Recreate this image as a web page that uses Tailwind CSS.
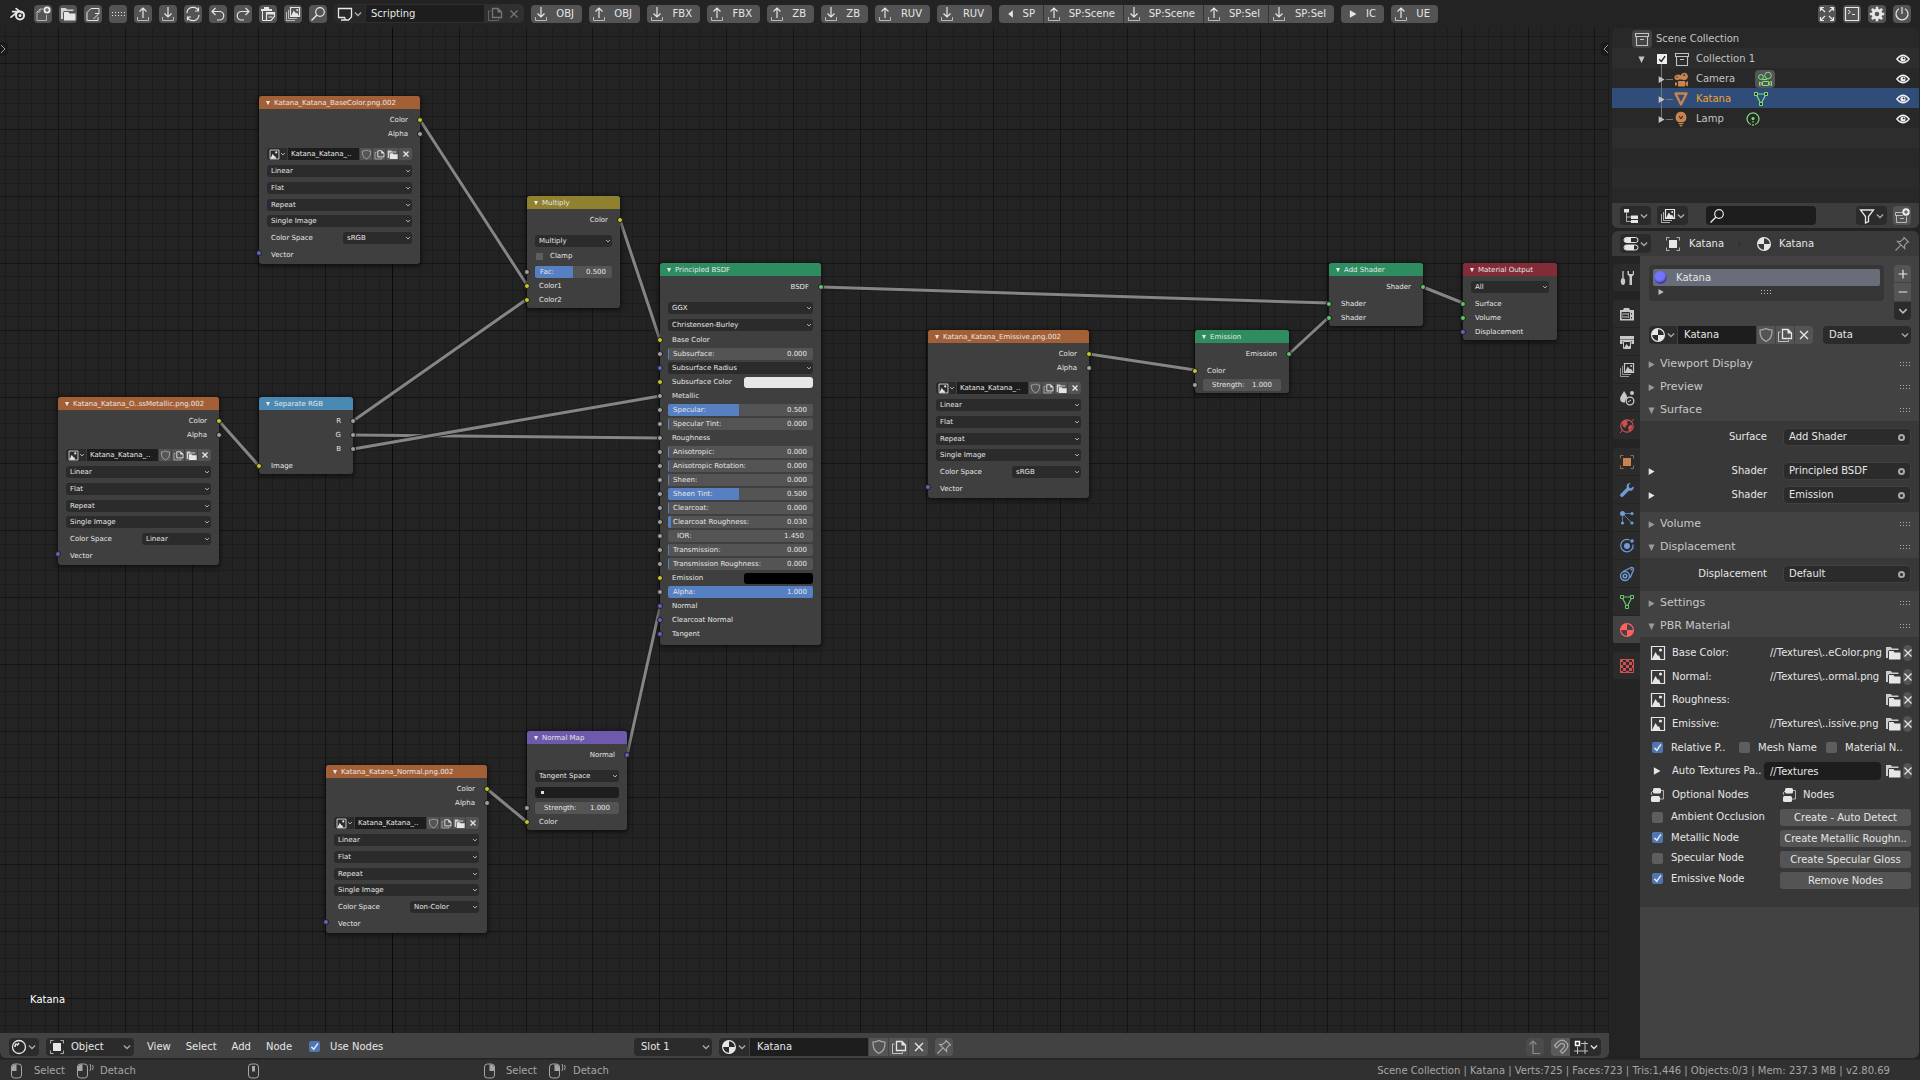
<!DOCTYPE html>
<html lang="en">
<head>
<meta charset="utf-8">
<title>Blender – Scripting</title>
<script src="https://cdn.jsdelivr.net/npm/@tailwindcss/browser@4"></script>
</head>
<body class="flex h-screen flex-col overflow-hidden bg-[#232323] font-['DejaVu_Sans',sans-serif] text-[10px] leading-[14px] text-[#e6e6e6]">

<!-- Icon set, drawn on a 16 px grid -->
<svg class="hidden" aria-hidden="true" fill="none">
  <defs>
  <symbol id="blender" viewBox="0 0 16 16"><path d="M1 11.2 8 5.6H2.6M6.2 2.6l5.4 4.2" fill="none" stroke="currentColor" stroke-width="1.7" stroke-linecap="round" stroke-linejoin="round"/><circle cx="10" cy="9.4" r="4" fill="none" stroke="currentColor" stroke-width="2"/><circle cx="10" cy="9.4" r="1.5" fill="currentColor"/></symbol>
  <symbol id="newfile" viewBox="0 0 16 16"><path d="M8 3H5L2 6v8.5h9.500V9M5 3v3H2" fill="none" stroke="currentColor" opacity=".65"/><circle cx="12" cy="4" r="3.500" fill="#eee"/><path d="M12 2v4M10 4h4" stroke="#444"/></symbol>
  <symbol id="folder" viewBox="0 0 16 16"><path d="M1 2h5l1 1.500h6.500V5H4L3 6.500V13H1z" fill="currentColor" opacity=".85"/><path d="M4 6h4.500l1 1.500h6v7H4z" fill="currentColor"/></symbol>
  <symbol id="save" viewBox="0 0 16 16"><path d="M14 2.500H6L2 6.500v8h11V11M14 2.500v5M10 7.500h4M14 7.500 8.500 13" fill="none" stroke="currentColor"/></symbol>
  <symbol id="dots" viewBox="0 0 16 16"><path d="M2 6.500h1m2 0h1m2 0h1m2 0h1m2 0h1M2 9.500h1m2 0h1m2 0h1m2 0h1m2 0h1" stroke="currentColor"/></symbol>
  <symbol id="up" viewBox="0 0 16 16"><path d="M2.500 11v3.500h11V11" fill="none" stroke="currentColor" opacity=".7"/><path d="M8 12V2M4.500 5.500 8 2l3.500 3.500" fill="none" stroke="currentColor" stroke-width="1.200"/></symbol>
  <symbol id="down" viewBox="0 0 16 16"><path d="M2.500 11v3.500h11V11" fill="none" stroke="currentColor" opacity=".7"/><path d="M8 1v10M4.500 7.500 8 11l3.500-3.500" fill="none" stroke="currentColor" stroke-width="1.200"/></symbol>
  <symbol id="refresh" viewBox="0 0 16 16"><path d="M2 7a6 6 0 0 1 11.500-2M14 9a6 6 0 0 1-11.500 2M13.500 1.500V5H10M2.500 14.500V11H6" fill="none" stroke="currentColor" stroke-width="1.200"/></symbol>
  <symbol id="undo" viewBox="0 0 16 16"><path d="M5.500 2 2 5.500 5.500 9M2 5.500h7.500a4 4 0 0 1 0 8.500H7" fill="none" stroke="currentColor" stroke-width="1.200"/></symbol>
  <symbol id="redo" viewBox="0 0 16 16"><path d="M10.500 2 14 5.500 10.500 9M14 5.500H6.500a4 4 0 0 0 0 8.500H9" fill="none" stroke="currentColor" stroke-width="1.200"/></symbol>
  <symbol id="paste" viewBox="0 0 16 16"><path d="M1 3h3V1h5v2h3v2H1z" fill="currentColor"/><path d="M2.500 5v9.500H6" fill="none" stroke="currentColor"/><path d="M6.500 6.500h8v4l-3.500 4H6.500z" fill="none" stroke="currentColor" stroke-width="1.200"/><path d="M6 6h9v2.500H6zM8.500 10.500h4v1h-4z" fill="currentColor"/></symbol>
  <symbol id="images" viewBox="0 0 16 16"><path d="M5.500 1.500h9v9h-9z" fill="none" stroke="currentColor" stroke-width="1.200"/><path d="M3.500 4v8.500H12M1.500 6v8.500H10" fill="none" stroke="currentColor" opacity=".7"/><path d="m6 10 2.800-5.500 2.200 3 1-1 2 3.500z" fill="currentColor"/><circle cx="12.200" cy="4" r="1" fill="currentColor"/></symbol>
  <symbol id="search" viewBox="0 0 16 16"><circle cx="10" cy="6" r="4.300" fill="none" stroke="currentColor" stroke-width="1.200"/><path d="m7 9-5.500 5.500" stroke="currentColor" stroke-width="1.400"/></symbol>
  <symbol id="screen" viewBox="0 0 16 16"><path d="M8 11.500H1.500v-9h13V9" fill="none" stroke="currentColor" stroke-width="1.300"/><path d="M8 11.500V14H4M8 14h3.500L14.500 11V8" fill="none" stroke="currentColor" stroke-width="1.300"/></symbol>
  <symbol id="copy" viewBox="0 0 16 16"><path d="M5.500 2.500H11L14.500 6v5.500h-9z" fill="none" stroke="currentColor" stroke-width="1.300"/><path d="M10.500 2v4.500H15z" fill="currentColor"/><path d="M3.500 5H1.500v9.500h10V13" fill="none" stroke="currentColor" opacity=".75"/></symbol>
  <symbol id="x" viewBox="0 0 16 16"><path d="m4 4 8 8M12 4l-8 8" stroke="currentColor" stroke-width="1.400"/></symbol>
  <symbol id="xb" viewBox="0 0 16 16"><path d="m3 3 10 10M13 3 3 13" stroke="currentColor" stroke-width="2.800"/></symbol>
  <symbol id="chev" viewBox="0 0 16 16"><path d="m3 5.500 5 5 5-5" fill="none" stroke="currentColor" stroke-width="2"/></symbol>
  <symbol id="right" viewBox="0 0 16 16"><path d="M3 2v12l10.500-6z" fill="currentColor"/></symbol>
  <symbol id="left" viewBox="0 0 16 16"><path d="M11 2v12L3.500 8z" fill="currentColor"/></symbol>
  <symbol id="tdown" viewBox="0 0 16 16"><path d="M2.500 2.500h11L8 14z" fill="currentColor"/></symbol>
  <symbol id="full" viewBox="0 0 16 16"><path d="M1.500 5V1.500H5M11 1.500h3.500V5M14.500 11v3.500H11M5 14.500H1.500V11M2 2l4 4M14 2l-4 4M14 14l-4-4M2 14l4-4" fill="none" stroke="currentColor" stroke-width="1.200"/></symbol>
  <symbol id="console" viewBox="0 0 16 16"><path d="M1.500 1.500h13v13h-13z" fill="none" stroke="currentColor" stroke-width="1.200"/><path d="m4 4 2.500 2L4 8M8 8.500h3" fill="none" stroke="currentColor"/></symbol>
  <symbol id="gear" viewBox="0 0 16 16"><circle cx="8" cy="8" r="3.800" fill="none" stroke="currentColor" stroke-width="3"/><path d="M8 .8v14.400M.8 8h14.400M2.900 2.900l10.200 10.200M13.100 2.900 2.900 13.100" stroke="currentColor" stroke-width="2.600" stroke-dasharray="3 8.400 3"/></symbol>
  <symbol id="power" viewBox="0 0 16 16"><path d="M5 2.700a6 6 0 1 0 6 0M8 1v7" fill="none" stroke="currentColor" stroke-width="1.200"/></symbol>
  <symbol id="coll" viewBox="0 0 16 16"><path d="M1.500 2.500h13v3h-13zM2.500 5.500v9h11v-9M6 8.500h4" fill="none" stroke="currentColor" stroke-width="1.100"/></symbol>
  <symbol id="collnew" viewBox="0 0 16 16"><path d="M8 4.500H1.500v3H9M2.500 7.500v7h10v-6M6 10.500h4" fill="none" stroke="currentColor" opacity=".7"/><circle cx="12" cy="4" r="3.700" fill="#eee"/><path d="M12 2v4M10 4h4" stroke="#444"/></symbol>
  <symbol id="eye" viewBox="0 0 16 16"><path d="M1.800 8Q8 .5 14.200 8 8 15.500 1.800 8z" fill="none" stroke="currentColor" stroke-width="1.300"/><circle cx="8" cy="8" r="2.600" fill="currentColor"/><circle cx="8.600" cy="7.400" r=".9" fill="#282828"/></symbol>
  <symbol id="camera" viewBox="0 0 16 16"><path d="M4.300 3.800a2.700 2.700 0 1 0 1.700 4.700h3A3.700 3.700 0 1 0 7.600 4.500 2.700 2.700 0 0 0 4.300 3.800zM5 10h7v5.500H5zM2 11l2 1v2l-2 1zM15 10v5.500l-2.500-1.500v-2.500z" fill="currentColor"/><path d="M3.500 6.300h1M10.500 4.300h1.500" stroke="#282828" stroke-width="1.500"/></symbol>
  <symbol id="camdata" viewBox="0 0 16 16"><circle cx="4" cy="6" r="2.400" fill="none" stroke="currentColor"/><circle cx="11" cy="4.500" r="3.300" fill="none" stroke="currentColor"/><path d="M5 8.500h5M5.500 10.500h6v4h-6zM2.500 11l2 1v1.500l-2 1zM14.500 10.500v4l-2.500-1.200v-1.600z" fill="none" stroke="currentColor"/></symbol>
  <symbol id="tri" viewBox="0 0 16 16"><path d="M2.500 2.500h11L8 13.500z" fill="none" stroke="currentColor" stroke-width="2.400" stroke-linejoin="round"/></symbol>
  <symbol id="lamp" viewBox="0 0 16 16"><path d="M8 .8a5.600 5.600 0 0 0-3 10.200h6A5.600 5.600 0 0 0 8 .8zM5.500 11.700h5v1.300h-5zM6 13.700h4L8.500 15.500h-1z" fill="currentColor"/><path d="M6 5.500h1v1.800h2V5.500h1" fill="none" stroke="#282828"/></symbol>
  <symbol id="mdata" viewBox="0 0 16 16"><path d="M3 3h10L8 13z" fill="none" stroke="currentColor" stroke-width="1.200"/><path d="M1.500 1.500h3v3h-3zM11.500 1.500h3v3h-3zM6.500 11.500h3v3h-3z" fill="#282828" stroke="currentColor"/></symbol>
  <symbol id="ldata" viewBox="0 0 16 16"><path d="M6 13.500A6 6 0 1 1 10 13.500" fill="none" stroke="currentColor" stroke-width="1.200"/><circle cx="8" cy="7.500" r="1.500" fill="currentColor"/><path d="M8 10v1.500M8 13v2" stroke="currentColor" stroke-width="1.200"/></symbol>
  <symbol id="tree" viewBox="0 0 16 16"><path d="M1 1h5v3.500H1zM8 7.500h7V11H8zM8 12h7v3H8z" fill="currentColor"/><path d="M3.500 4.500v9H8M3.500 9H8" fill="none" stroke="currentColor" opacity=".7"/></symbol>
  <symbol id="filter" viewBox="0 0 16 16"><path d="M1.500 2h13L9.500 8.500v5l-3 1.500V8.500z" fill="none" stroke="currentColor" stroke-width="1.300"/></symbol>
  <symbol id="props" viewBox="0 0 16 16"><path d="M3.500 1.500h9a2.500 2.500 0 0 1 0 5h-9a2.500 2.500 0 0 1 0-5zM3.500 9h9a2.500 2.500 0 0 1 0 5h-9a2.500 2.500 0 0 1 0-5z" fill="none" stroke="currentColor"/><path d="M4 1.500h4v5H4a2.500 2.500 0 0 1 0-5zM4 9h7v5H4a2.500 2.500 0 0 1 0-5z" fill="currentColor"/></symbol>
  <symbol id="object" viewBox="0 0 16 16"><path d="M4 4h8v8H4z" fill="currentColor"/><path d="M1.500 4.500v-3h3M11.500 1.500h3v3M14.500 11.500v3h-3M4.500 14.500h-3v-3" fill="none" stroke="currentColor" opacity=".7"/></symbol>
  <symbol id="mat" viewBox="0 0 16 16"><circle cx="8" cy="8" r="6.400" fill="none" stroke="currentColor" stroke-width="1.200"/><path d="M8 8V1.600A6.400 6.400 0 0 0 1.600 8zM8 8v6.400A6.400 6.400 0 0 0 14.400 8z" fill="currentColor"/></symbol>
  <symbol id="pin" viewBox="0 0 16 16"><path d="M10 1.500 14.500 6l-1.500.5-2.500 3 .2 3L3.500 5.300l3 .2 3-2.500zM6.800 9.200 1.500 14.500" fill="none" stroke="currentColor" stroke-width="1.100"/></symbol>
  <symbol id="tool" viewBox="0 0 16 16"><path d="M4 1v7" stroke="currentColor" stroke-width="1.300"/><path d="M4 8c1.500 0 2.200 1.200 2.200 3.500S5.200 15 4 15s-2.200-1.200-2.200-3.500S2.500 8 4 8z" fill="currentColor"/><path d="M8.500 1v3.500l2 2V15H13V6.500l2-2V1h-1.200v3H10V1z" fill="currentColor"/></symbol>
  <symbol id="render" viewBox="0 0 16 16"><path d="M1 4h3l1-2h5l1 2h4v10.500H1z" fill="currentColor"/><path d="M3 6.500h7.500v6H3zM4 8h5.500M4 9.500h5.500M4 11h5.500M12.500 7v1.500M12.500 11v1.500" fill="none" stroke="#2b2b2b"/></symbol>
  <symbol id="output" viewBox="0 0 16 16"><path d="M1 2h14v3H1zM1 5.500h14V10h-2.500V7h-9v3H1z" fill="currentColor"/><path d="M4.500 7.500h7v7h-7z" fill="none" stroke="currentColor"/><path d="M5 14 7.500 10l2 2.500 1-1 1 2.500z" fill="currentColor"/></symbol>
  <symbol id="scene" viewBox="0 0 16 16"><path d="M5 1c2.500 4 3.300 5 3.300 7-2 1-2.500 3-2.300 4.500C3 13 1.200 11.500 1.200 9S3 5 5 1z" fill="currentColor"/><circle cx="11" cy="11" r="3.800" fill="none" stroke="currentColor" stroke-width="1.300"/><circle cx="13" cy="3" r="2" fill="currentColor"/><path d="m9 12 3-2" stroke="currentColor"/></symbol>
  <symbol id="world" viewBox="0 0 16 16"><circle cx="8" cy="8" r="6.200" fill="none" stroke="currentColor" stroke-width="1.200"/><path d="m1 15 3-3M12 4l3-3" stroke="currentColor"/><path d="M3 4.500 6 2l3 .5-1 2 1 1.500-2 2-1 2-2-1.500zM9 9l3-2.500 1.500 2-2 4L10 14l-.5-3z" fill="currentColor"/></symbol>
  <symbol id="wrench" viewBox="0 0 16 16"><path d="M14.500 4.200 11.800 6.500 9.700 5l.5-2.800L11.800 1C9 .5 7 3 7.800 5.800L1.300 12.200c-1 1.500 1 3.500 2.500 2.500L10 8.500c3 .8 5.300-1.300 4.500-4.300z" fill="currentColor"/></symbol>
  <symbol id="part" viewBox="0 0 16 16"><path d="M3.500 3.500 12 12M3.500 3.500H12M3.500 3.500V12" stroke="currentColor" opacity=".7" fill="none"/><circle cx="3.500" cy="3.500" r="2.500" fill="currentColor"/><circle cx="13" cy="3.500" r="1.600" fill="currentColor"/><circle cx="3.500" cy="13" r="1.600" fill="currentColor"/><circle cx="13" cy="13" r="1.600" fill="currentColor"/></symbol>
  <symbol id="phys" viewBox="0 0 16 16"><path d="M10.500 2A6.200 6.200 0 1 0 14 6.500" fill="none" stroke="currentColor" stroke-width="1.200"/><circle cx="8" cy="8" r="3" fill="currentColor"/><circle cx="13" cy="3" r="1.800" fill="currentColor"/></symbol>
  <symbol id="constr" viewBox="0 0 16 16"><path d="M4 5.500 12 1.500a2 2 0 0 1 2.500 2.500l-3.500 8" fill="none" stroke="currentColor" stroke-width="1.300"/><circle cx="6" cy="10" r="4.500" fill="none" stroke="currentColor" stroke-width="1.300"/><circle cx="6" cy="10" r="1.800" fill="none" stroke="currentColor" stroke-width="1.500"/><circle cx="12.500" cy="3.500" r="1" fill="currentColor"/></symbol>
  <symbol id="texture" viewBox="0 0 16 16"><path d="M1.500 1.500h13v13h-13z" fill="none" stroke="currentColor"/><path d="M1 1h3v3H1zM7 1h3v3H7zM4 4h3v3H4zM10 4h3v3h-3zM1 7h3v3H1zM7 7h3v3H7zM13 7h2v3h-2zM4 10h3v3H4zM10 10h3v3h-3zM1 13h3v2H1zM7 13h3v2H7zM13 1h2v3h-2z" fill="currentColor"/></symbol>
  <symbol id="image" viewBox="0 0 16 16"><path d="M1.500 1.500h13v13h-13z" fill="none" stroke="currentColor" stroke-width="1.200"/><path d="m2 14 3.500-7 2.500 4 1-1 1.500 4z" fill="currentColor"/><circle cx="10.500" cy="5" r="1.600" fill="currentColor"/></symbol>
  <symbol id="nodes" viewBox="0 0 16 16"><rect x="3" y="1" width="8" height="5.500" rx="1.500" fill="currentColor"/><rect x="1" y="9" width="9" height="6" rx="1.500" fill="currentColor"/><path d="M11 3.500h2.500V12H10M3 4l-2 2 1 2" fill="none" stroke="currentColor" opacity=".7"/></symbol>
  <symbol id="shield" viewBox="0 0 16 16"><path d="M8 1.500c2 1.200 4 1.500 6 1.500.3 6-1.500 9.500-6 11.500C3.500 12.500 1.700 9 2 3c2 0 4-.3 6-1.500z" fill="none" stroke="currentColor" stroke-width="1.200" opacity=".6"/></symbol>
  <symbol id="grip" viewBox="0 0 12 12"><path d="M0 4.500h1m2 0h1m2 0h1m2 0h1M0 7.500h1m2 0h1m2 0h1m2 0h1" stroke="currentColor"/></symbol>
  <symbol id="mouseL" viewBox="0 0 16 16"><rect x="2.500" y="1" width="10" height="14" rx="3" fill="none" stroke="currentColor"/><path d="M5 1.500h2.500V8h-5V4z" fill="currentColor"/></symbol>
  <symbol id="mouseM" viewBox="0 0 16 16"><rect x="2.500" y="1" width="10" height="14" rx="3" fill="none" stroke="currentColor"/><path d="M6 3h3v5.500H6z" fill="currentColor"/></symbol>
  <symbol id="mouseR" viewBox="0 0 16 16"><rect x="2.500" y="1" width="10" height="14" rx="3" fill="none" stroke="currentColor"/><path d="M7.500 1.500H10L12.500 4v4h-5z" fill="currentColor"/></symbol>
  <symbol id="drag" viewBox="0 0 6 16"><path d="M1 1q1.500 3.500 0 7M3.500 2q1.500 2.500 0 5" stroke="currentColor" fill="none"/></symbol>
  <symbol id="parent" viewBox="0 0 16 16"><path d="M6 2v12.500h7M2.500 5.500 6 2l3.500 3.500" fill="none" stroke="currentColor" stroke-width="1.200"/></symbol>
  <symbol id="magnet" viewBox="0 0 16 16"><path d="m1.500 6.500 4-4c5-4 12 2.500 8 7.500l-4 4.500-2.200-2.200 3.700-4c1.800-2.500-1.500-5-3.500-3.500l-4 4z" fill="none" stroke="currentColor" stroke-width="1.200"/></symbol>
  <symbol id="snap" viewBox="0 0 16 16"><path d="M4.500 8v7M12 2v13M8 4.500h7M1 12h14" stroke="currentColor" opacity=".8"/><path d="M2.500 2.500h4v4h-4z" fill="none" stroke="#fff" stroke-width="1.500"/></symbol>
  <symbol id="sphere" viewBox="0 0 16 16"><circle cx="8" cy="8" r="6.500" fill="none" stroke="currentColor" stroke-width="1.300"/><path d="M4 8a4.500 4.500 0 0 1 1.500-3.500M6 6.500 8 4" fill="none" stroke="currentColor" stroke-width="1.600"/></symbol>
  <symbol id="plus" viewBox="0 0 16 16"><path d="M8 3v10M3 8h10" stroke="currentColor" stroke-width="1.400"/></symbol>
  <symbol id="minus" viewBox="0 0 16 16"><path d="M3 8h10" stroke="currentColor" stroke-width="1.400"/></symbol>
  <symbol id="check" viewBox="0 0 16 16"><path d="M3.500 8.500 7 12l6-8.500" fill="none" stroke="currentColor" stroke-width="2.200"/></symbol>
  </defs>
</svg>

<!-- Top bar -->
<header class="flex h-[27px] shrink-0 items-center justify-between pr-[9px] pl-2">
  <div class="flex items-center gap-[7px]">
    <button aria-label="Blender menu" class="flex w-[19px] justify-center"><svg class="size-4"><use href="#blender"/></svg></button>
    <div id="file-tools" class="flex gap-[7px]"></div>
    <div class="flex h-[19px] gap-px overflow-hidden rounded-[4px] border border-[#2e2e2e] bg-[#2e2e2e]">
      <button aria-label="Workspace list" class="flex w-[30px] items-center justify-center bg-[#282828]"><svg class="size-4"><use href="#screen"/></svg><svg class="size-[10px] text-[#aaa]"><use href="#chev"/></svg></button>
      <input aria-label="Workspace name" value="Scripting" class="w-[118px] bg-[#1d1d1d] px-[5px]">
      <button aria-label="Duplicate workspace" class="flex w-[19px] items-center justify-center bg-[#303030] text-[#777]"><svg class="size-4"><use href="#copy"/></svg></button>
      <button aria-label="Delete workspace" class="flex w-[18px] items-center justify-center bg-[#303030] text-[#777]"><svg class="size-[14px]"><use href="#x"/></svg></button>
    </div>
    <nav id="exporters" class="flex gap-[7px]"></nav>
  </div>
  <div id="window-tools" class="flex gap-[7px]"></div>
</header>

<main class="flex min-h-0 flex-1 gap-[3px] pr-px">
  <!-- Shader editor -->
  <section class="flex min-w-0 flex-1 flex-col overflow-hidden rounded-b-[6px]">
    <div id="canvas" class="relative min-h-0 flex-1 overflow-hidden bg-[#232323]">
      <svg id="wires" class="absolute inset-0 h-full w-full"></svg>
      <button aria-label="Show tool shelf" class="absolute left-0 top-[15px] flex h-[14px] w-2 items-center rounded-r-[4px] bg-[#1a1a1a] text-[#999]"><svg class="h-3 w-2" viewBox="0 0 8 12" fill="none" stroke="currentColor"><path d="m1 2 4 4-4 4"/></svg></button>
      <button aria-label="Show sidebar" class="absolute right-0 top-[15px] flex h-[14px] w-2 items-center rounded-l-[4px] bg-[#1a1a1a] text-[#999]"><svg class="h-3 w-2" viewBox="0 0 8 12" fill="none" stroke="currentColor"><path d="M7 2 3 6l4 4"/></svg></button>
      <p class="absolute bottom-[26px] left-[30px] text-white">Katana</p>
    </div>
    <div class="relative flex h-[25px] shrink-0 items-center justify-between bg-[#424242] pt-[2px] pr-2 pl-[9px]">
      <div class="flex items-center">
        <button aria-label="Editor type" class="flex h-[18px] w-[30px] items-center justify-center rounded-[4px] bg-[#2b2b2b]"><svg class="size-4"><use href="#sphere"/></svg><svg class="size-[10px] text-[#aaa]"><use href="#chev"/></svg></button>
        <label class="relative ml-[7px] flex h-[18px] w-[88px] items-center rounded-[4px] bg-[#2b2b2b]">
          <svg class="pointer-events-none absolute left-[3px] size-4"><use href="#object"/></svg>
          <select aria-label="Shader type" class="h-full w-full appearance-none pl-[25px]"><option>Object</option></select>
          <svg class="pointer-events-none absolute right-[2px] size-[10px] text-[#aaa]"><use href="#chev"/></svg>
        </label>
        <div class="ml-[13px] flex gap-[15px]"><button>View</button><button>Select</button><button>Add</button><button>Node</button></div>
        <label class="ml-[17px] flex items-center gap-[10px]"><span data-check="1" class="flex"></span>Use Nodes</label>
      </div>
      <div class="absolute left-[634px] flex items-center gap-[7px]">
        <label class="relative flex h-[18px] w-[78px] items-center rounded-[4px] bg-[#2b2b2b]"><select aria-label="Material slot" class="h-full w-full appearance-none pl-[7px]"><option>Slot 1</option></select><svg class="pointer-events-none absolute right-[1px] size-[10px] text-[#aaa]"><use href="#chev"/></svg></label>
        <div class="flex h-[18px] gap-px overflow-hidden rounded-[4px]">
          <button aria-label="Browse material" class="flex w-[30px] items-center justify-center bg-[#2b2b2b]"><svg class="size-4"><use href="#mat"/></svg><svg class="size-[10px] text-[#aaa]"><use href="#chev"/></svg></button>
          <input aria-label="Material name" value="Katana" class="w-[118px] bg-[#1d1d1d] px-[7px]">
          <button aria-label="Fake user" class="flex w-[19px] items-center justify-center bg-[#545454]"><svg class="size-4"><use href="#shield"/></svg></button>
          <button aria-label="Duplicate" class="flex w-[19px] items-center justify-center bg-[#545454]"><svg class="size-4"><use href="#copy"/></svg></button>
          <button aria-label="Unlink" class="flex w-[19px] items-center justify-center bg-[#545454]"><svg class="size-4"><use href="#x"/></svg></button>
        </div>
        <button aria-label="Pin" class="flex size-[18px] items-center justify-center rounded-[4px] bg-[#545454] text-[#aaa]"><svg class="size-4"><use href="#pin"/></svg></button>
      </div>
      <div class="flex items-center gap-[7px]">
        <button aria-label="Parent tree" class="flex h-[18px] w-[18px] items-center justify-center rounded-[4px] bg-[#4b4b4b] text-[#8a8a8a]"><svg class="size-4"><use href="#parent"/></svg></button>
        <div class="flex h-[18px] overflow-hidden rounded-[4px]">
          <button aria-label="Snap" class="flex w-[19px] items-center justify-center bg-[#5a5a5a] text-[#aaa]"><svg class="size-4"><use href="#magnet"/></svg></button>
          <button aria-label="Snap target" class="flex w-[31px] items-center justify-center bg-[#2b2b2b]"><svg class="size-4"><use href="#snap"/></svg><svg class="size-[10px]"><use href="#chev"/></svg></button>
        </div>
      </div>
    </div>
  </section>

  <aside class="flex w-[307px] shrink-0 flex-col gap-[3px] pt-px">
    <!-- Outliner -->
    <section class="flex h-[200px] shrink-0 flex-col overflow-hidden rounded-[6px] bg-[#282828]">
      <ul class="flex-1 text-[#c3c3c3]">
        <li class="flex h-5 items-center pt-[2px] pl-5"><span class="flex h-[18px] w-5 items-center justify-center rounded-[4px] bg-[#444]"><svg class="size-4"><use href="#coll"/></svg></span><span class="pl-1">Scene Collection</span></li>
        <li class="flex h-5 items-center bg-[#2d2d2d] pt-[2px] pr-2 pl-[25px]"><svg class="size-[9px]"><use href="#tdown"/></svg>
          <label class="ml-[11px] flex"><input type="checkbox" checked aria-label="Collection 1 enabled" class="peer size-[10px] appearance-none bg-[#eee]"><svg class="pointer-events-none absolute size-[10px] text-[#222]"><use href="#check"/></svg></label>
          <svg class="ml-[7px] size-4"><use href="#coll"/></svg><span class="flex-1 pl-[6px]">Collection 1</span><svg class="size-4 text-[#eee]"><use href="#eye"/></svg></li>
        <li class="relative flex h-5 items-center pt-[2px] pr-2 pl-[45px]"><i class="absolute -top-[4px] left-[49px] h-[54px] w-px bg-[#777]"></i><svg class="relative size-[9px]"><use href="#right"/></svg><i class="h-px w-[7px] bg-[#777]"></i><svg class="size-4 text-[#c8834f]"><use href="#camera"/></svg><span class="pl-[7px]">Camera</span><span class="ml-5 flex h-[18px] w-5 items-center justify-center rounded-[4px] bg-[#555] text-[#7ee07e]"><svg class="size-4"><use href="#camdata"/></svg></span><svg class="ml-auto size-4 text-[#eee]"><use href="#eye"/></svg></li>
        <li class="flex h-5 items-center bg-[#2f4d78] pt-[2px] pr-2 pl-[45px]"><svg class="relative size-[9px]"><use href="#right"/></svg><i class="h-px w-[7px] bg-[#777]"></i><svg class="size-4 text-[#c8834f]"><use href="#tri"/></svg><span class="pl-[7px] text-[#f0a030]">Katana</span><svg class="ml-[22px] size-4 text-[#7ee07e]"><use href="#mdata"/></svg><svg class="ml-auto size-4 text-[#eee]"><use href="#eye"/></svg></li>
        <li class="flex h-5 items-center pt-[2px] pr-2 pl-[45px]"><svg class="relative size-[9px]"><use href="#right"/></svg><i class="h-px w-[7px] bg-[#777]"></i><svg class="size-4 text-[#c8834f]"><use href="#lamp"/></svg><span class="pl-[7px]">Lamp</span><svg class="ml-[21px] size-4 text-[#7ee07e]"><use href="#ldata"/></svg><svg class="ml-auto size-4 text-[#eee]"><use href="#eye"/></svg></li>
        <li class="h-5 bg-[#2d2d2d]"></li><li class="h-5"></li><li class="h-5 bg-[#2b2b2b]"></li>
      </ul>
      <div class="flex h-[25px] items-center bg-[#3d3d3d] px-2">
        <button aria-label="Editor type" class="flex h-[19px] w-[31px] items-center justify-center rounded-[4px] bg-[#2b2b2b]"><svg class="size-4"><use href="#tree"/></svg><svg class="size-[10px] text-[#aaa]"><use href="#chev"/></svg></button>
        <button aria-label="Display mode" class="ml-[6px] flex h-[19px] w-[31px] items-center justify-center rounded-[4px] bg-[#2b2b2b]"><svg class="size-4"><use href="#images"/></svg><svg class="size-[10px] text-[#aaa]"><use href="#chev"/></svg></button>
        <label class="relative ml-[18px] flex h-[19px] w-[110px] items-center rounded-[4px] bg-[#1d1d1d]"><svg class="absolute left-[3px] size-4"><use href="#search"/></svg><input aria-label="Search" class="h-full w-full pl-6"></label>
        <button aria-label="Filter" class="ml-auto flex h-[19px] w-[31px] items-center justify-center rounded-[4px] bg-[#2b2b2b]"><svg class="size-4"><use href="#filter"/></svg><svg class="size-[10px] text-[#aaa]"><use href="#chev"/></svg></button>
        <button aria-label="New collection" class="ml-[6px] flex h-[19px] w-[18px] items-center justify-center rounded-[4px] bg-[#545454]"><svg class="size-4"><use href="#collnew"/></svg></button>
      </div>
    </section>

    <!-- Properties -->
    <section class="flex min-h-0 flex-1 flex-col overflow-hidden rounded-[6px]">
      <div class="flex h-[25px] shrink-0 items-center bg-[#3a3a3a] pr-[9px] pl-2">
        <button aria-label="Editor type" class="flex h-[19px] w-[31px] items-center justify-center rounded-[4px] bg-[#2b2b2b]"><svg class="size-4"><use href="#props"/></svg><svg class="size-[10px] text-[#aaa]"><use href="#chev"/></svg></button>
        <svg class="ml-[14px] size-4"><use href="#object"/></svg><span class="ml-2">Katana</span>
        <svg class="ml-2 size-4 text-[#2b2b2b]" viewBox="0 0 16 16" fill="none" stroke="currentColor"><path d="m6 5 3 3-3 3"/></svg>
        <svg class="ml-2 size-4"><use href="#mat"/></svg><span class="ml-[7px]">Katana</span>
        <button aria-label="Pin" class="ml-auto text-[#999]"><svg class="size-4"><use href="#pin"/></svg></button>
      </div>
      <div class="flex min-h-0 flex-1">
        <nav id="tabs" class="flex w-7 shrink-0 flex-col gap-2 pt-2 pl-px"></nav>
        <div class="min-w-0 flex-1 bg-[#424242]">
          <div class="flex gap-[10px] pt-[9px] pr-2 pl-[9px]">
            <div class="h-9 flex-1 rounded-[4px] bg-[#363636] px-1 pt-1">
              <div class="flex h-[17px] items-center gap-[9px] rounded-[2px] bg-[#696d79] px-px"><span class="size-[13px] rounded-full bg-[#7475ff] shadow-[inset_-1px_-2px_2px_#3b3b88]"></span>Katana</div>
              <div class="relative flex h-3 items-center justify-center text-[#bbb]"><svg class="absolute left-1 size-2"><use href="#right"/></svg><svg class="size-3"><use href="#grip"/></svg></div>
            </div>
            <div class="flex w-[17px] flex-col gap-px overflow-hidden rounded-[4px]">
              <button aria-label="Add slot" class="flex h-[17px] items-center justify-center bg-[#545454]"><svg class="size-[14px]"><use href="#plus"/></svg></button>
              <button aria-label="Remove slot" class="flex h-[18px] items-center justify-center bg-[#545454]"><svg class="size-[14px]"><use href="#minus"/></svg></button>
              <button aria-label="Slot specials" class="flex h-[18px] items-center justify-center bg-[#2b2b2b] text-[#bbb]"><svg class="size-3"><use href="#chev"/></svg></button>
            </div>
          </div>
          <div class="flex h-[18px] gap-[10px] mt-[6px] mb-2 pr-2 pl-[9px]">
            <div class="flex min-w-0 flex-1 gap-px overflow-hidden rounded-[4px]">
              <button aria-label="Browse material" class="flex w-7 shrink-0 items-center justify-center bg-[#2b2b2b]"><svg class="size-4"><use href="#mat"/></svg><svg class="size-[10px] text-[#aaa]"><use href="#chev"/></svg></button>
              <input aria-label="Material name" value="Katana" class="min-w-0 flex-1 bg-[#1d1d1d] px-[6px]">
              <button aria-label="Fake user" class="flex w-[18px] items-center justify-center bg-[#545454]"><svg class="size-4"><use href="#shield"/></svg></button>
              <button aria-label="Duplicate" class="flex w-[18px] items-center justify-center bg-[#545454]"><svg class="size-4"><use href="#copy"/></svg></button>
              <button aria-label="Unlink" class="flex w-[18px] items-center justify-center bg-[#545454]"><svg class="size-4"><use href="#x"/></svg></button>
            </div>
            <label class="relative flex w-[88px] items-center rounded-[4px] bg-[#2b2b2b]"><select aria-label="Link" class="h-full w-full appearance-none pl-[6px]"><option>Data</option></select><svg class="pointer-events-none absolute right-[1px] size-[10px] text-[#aaa]"><use href="#chev"/></svg></label>
          </div>

          <h2 data-panel="right" class="flex h-[23px] items-center gap-[4px] pt-px pr-[7px] pl-[7px] text-[11px] text-[#c8c8c8]">Viewport Display</h2>
          <h2 data-panel="right" class="flex h-[23px] items-center gap-[4px] pt-px pr-[7px] pl-[7px] text-[11px] text-[#c8c8c8]">Preview</h2>
          <h2 data-panel="tdown" class="flex h-[23px] items-center gap-[4px] pt-px pr-[7px] pl-[7px] text-[11px] text-[#c8c8c8]">Surface</h2>
          <div class="flex flex-col bg-[#383838] pt-[7px] pr-2 pb-2 pl-[7px]">
            <div data-field="Surface|Add Shader" class="mb-4 flex h-[18px] items-center"></div>
            <div data-field="Shader|Principled BSDF|1" class="mb-[6px] flex h-[18px] items-center"></div>
            <div data-field="Shader|Emission|1" class="flex h-[18px] items-center"></div>
          </div>
          <h2 data-panel="right" class="flex h-[23px] items-center gap-[4px] pt-px pr-[7px] pl-[7px] text-[11px] text-[#c8c8c8]">Volume</h2>
          <h2 data-panel="tdown" class="flex h-[23px] items-center gap-[4px] pt-px pr-[7px] pl-[7px] text-[11px] text-[#c8c8c8]">Displacement</h2>
          <div class="bg-[#383838] pt-[7px] pr-2 pb-2 pl-[7px]"><div data-field="Displacement|Default" class="flex h-[18px] items-center"></div></div>
          <h2 data-panel="right" class="flex h-[23px] items-center gap-[4px] pt-px pr-[7px] pl-[7px] text-[11px] text-[#c8c8c8]">Settings</h2>
          <h2 data-panel="tdown" class="flex h-[23px] items-center gap-[4px] pt-px pr-[7px] pl-[7px] text-[11px] text-[#c8c8c8]">PBR Material</h2>
          <div class="bg-[#383838] pt-1 pb-[18px]">
            <div class="flex h-[166px] flex-col pr-[7px] pl-[10px]">
              <div data-file="Base Color:|//Textures\..eColor.png" class="flex flex-1 items-center"></div>
              <div data-file="Normal:|//Textures\..ormal.png" class="flex flex-1 items-center"></div>
              <div data-file="Roughness:|" class="flex flex-1 items-center"></div>
              <div data-file="Emissive:|//Textures\..issive.png" class="flex flex-1 items-center"></div>
              <div class="grid flex-1 grid-cols-3 items-center gap-px pl-[2px] whitespace-nowrap">
                <label class="flex items-center gap-2"><span data-check="1" class="flex"></span>Relative P..</label>
                <label class="flex items-center gap-2"><span data-check="0" class="flex"></span>Mesh Name</label>
                <label class="flex items-center gap-2"><span data-check="0" class="flex"></span>Material N..</label>
              </div>
              <div class="flex flex-1 items-center"><svg class="ml-[2px] size-[10px]"><use href="#right"/></svg><label for="autotex" class="ml-[10px] w-[92px] shrink-0 whitespace-nowrap">Auto Textures Pa..</label><input id="autotex" value="//Textures" class="h-[18px] min-w-0 flex-1 rounded-[4px] bg-[#1d1d1d] px-[6px]"><button aria-label="Open folder" class="ml-1"><svg class="size-4"><use href="#folder"/></svg></button><button aria-label="Clear" class="ml-[2px] flex h-4 w-[9px] items-center justify-center rounded-full bg-[#545454]"><svg class="size-[14px] shrink-0"><use href="#x"/></svg></button></div>
              <div class="flex flex-1 items-center"><div class="flex w-[132px] items-center gap-[6px]"><svg class="size-4"><use href="#nodes"/></svg>Optional Nodes</div><svg class="size-4"><use href="#nodes"/></svg><span class="pl-[5px]">Nodes</span></div>
            </div>
            <div class="flex justify-between pr-2 pl-[12px]">
              <div class="flex flex-col">
                <label class="flex h-[20px] items-center gap-2"><span data-check="0" class="flex"></span>Ambient Occlusion</label>
                <label class="flex h-[21px] items-center gap-2"><span data-check="1" class="flex"></span>Metallic Node</label>
                <label class="flex h-[20px] items-center gap-2"><span data-check="0" class="flex"></span>Specular Node</label>
                <label class="flex h-[21px] items-center gap-2"><span data-check="1" class="flex"></span>Emissive Node</label>
              </div>
              <div class="flex w-[131px] flex-col gap-1 pt-[2px]">
                <button class="h-[17px] rounded-[3px] bg-[#545454] whitespace-nowrap">Create - Auto Detect</button>
                <button class="h-[17px] rounded-[3px] bg-[#545454] whitespace-nowrap">Create Metallic Roughn..</button>
                <button class="h-[17px] rounded-[3px] bg-[#545454] whitespace-nowrap">Create Specular Gloss</button>
                <button class="h-[17px] rounded-[3px] bg-[#545454] whitespace-nowrap">Remove Nodes</button>
              </div>
            </div>
          </div>
        </div>
      </div>
    </section>
  </aside>
</main>

<!-- Status bar -->
<footer class="mt-px flex h-[21px] shrink-0 items-center border-t border-[#282828] bg-[#303030] pt-px pr-[30px] pl-[9px] text-[#a6a6a6]">
  <div class="flex w-[237px] items-center"><svg class="size-4"><use href="#mouseL"/></svg><span class="w-[50px] pl-[9px]">Select</span><svg class="size-4"><use href="#mouseL"/></svg><svg class="-ml-[2px] h-4 w-[6px]"><use href="#drag"/></svg><span class="pl-[5px]">Detach</span></div>
  <div class="flex w-[236px] items-center"><svg class="size-4"><use href="#mouseM"/></svg></div>
  <div class="flex items-center"><svg class="size-4"><use href="#mouseR"/></svg><span class="w-[49px] pl-2">Select</span><svg class="size-4"><use href="#mouseR"/></svg><svg class="-ml-[2px] h-4 w-[6px]"><use href="#drag"/></svg><span class="pl-[6px]">Detach</span></div>
  <span class="ml-auto whitespace-nowrap">Scene Collection | Katana | Verts:725 | Faces:723 | Tris:1,446 | Objects:0/3 | Mem: 237.3 MB | v2.80.69</span>
</footer>

<script>
const $ = s => document.querySelector(s);
const icon = (id, cls) => `<svg class="${cls}"><use href="#${id}"/></svg>`;

// Square buttons of the top bar
const square = ([id, name]) => `<button aria-label="${name}" class="flex size-[18px] items-center justify-center rounded-[4px] bg-[#545454]">${icon(id, 'size-4')}</button>`;
$('#file-tools').innerHTML = [['newfile','New'],['folder','Open'],['save','Save'],['dots','Auto save'],['up','Export'],['down','Import'],['refresh','Reload'],['undo','Undo'],['redo','Redo'],['paste','History'],['images','Render'],['search','Search']].map(square).join('');
$('#window-tools').innerHTML = [['full','Full screen'],['console','Console'],['gear','Preferences'],['power','Quit']].map(square).join('');

// Import and export buttons; each inner list is one joined group
const W = {OBJ:'w-[51px]',FBX:'w-[53px]',ZB:'w-[47px]',RUV:'w-[55px]',SP:'w-[45px]','SP:Scene':'w-[80px]','SP:Sel':'w-[65px]',IC:'w-[43px]',UE:'w-[47px]'};
$('#exporters').innerHTML = [['down OBJ'],['up OBJ'],['down FBX'],['up FBX'],['up ZB'],['down ZB'],['up RUV'],['down RUV'],['left SP','up SP:Scene','down SP:Scene','up SP:Sel','down SP:Sel'],['right IC'],['up UE']]
  .map(g => `<div class="flex h-[18px] divide-x divide-[#333] overflow-hidden rounded-[4px] bg-[#545454]">${g.map(b => { const [i, t] = b.split(' '); return `<button class="flex items-center justify-between pr-2 pl-[2px] ${W[t]}">${i === 'left' || i === 'right' ? icon(i, 'ml-[5px] size-[10px]') : icon(i, 'size-4')}${t}</button>`; }).join('')}</div>`).join('');

// Property tabs
const tab = ([id, color, on]) => `<button aria-label="${id}" class="flex h-7 items-center justify-center border-b border-[#242424] ${on ? 'bg-[#424242]' : 'bg-[#2b2b2b]'} ${color}">${icon(id, 'size-4')}</button>`;
$('#tabs').innerHTML = [
  [['tool','text-[#c8c8c8]']],
  [['render','text-[#c8c8c8]'],['output','text-[#c8c8c8]'],['images','text-[#c8c8c8]'],['scene','text-[#c8c8c8]'],['world','text-[#d05050]']],
  [['object','text-[#c8834f]'],['wrench','text-[#6f9bd8]'],['part','text-[#6f9bd8]'],['phys','text-[#6f9bd8]'],['constr','text-[#6f9bd8]'],['mdata','text-[#6cc86c]'],['mat','text-[#ff6060]',1]],
  [['texture','text-[#d05050]']]
].map(g => `<div class="flex flex-col overflow-hidden rounded-l-[4px]">${g.map(tab).join('')}</div>`).join('');

document.querySelectorAll('[data-check]').forEach(e => {
  const on = e.dataset.check === '1';
  e.innerHTML = `<input type="checkbox" ${on ? 'checked' : ''} class="size-[11px] appearance-none rounded-[2px] bg-[#5e5e5e] checked:bg-[#4f76b3]">${on ? icon('check', 'pointer-events-none absolute size-[11px]') : ''}`;
});
document.querySelectorAll('[data-panel]').forEach(e => {
  e.innerHTML = icon(e.dataset.panel, 'size-[9px] text-[#999]') + `<span class="flex-1">${e.textContent}</span>` + icon('grip', 'size-3 text-[#aaa]');
});
document.querySelectorAll('[data-field]').forEach(e => {
  const [l, v, t] = e.dataset.field.split('|');
  e.innerHTML = `${t ? icon('right', 'size-[9px]') : ''}<span class="flex-1 pr-4 text-right">${l}</span><button aria-label="${l}" class="flex h-[18px] w-[128px] items-center justify-between rounded-[4px] border border-[#404040] bg-[#2b2b2b] px-[5px]">${v}<i class="size-[7px] rounded-full border-2 border-[#aaa]"></i></button>`;
});
document.querySelectorAll('[data-file]').forEach((e, i) => {
  const [l, v] = e.dataset.file.split('|');
  e.innerHTML = `${icon('image', 'size-4')}<label for="file${i}" class="w-[104px] pl-[6px]">${l}</label><input id="file${i}" value="${v}" class="min-w-0 flex-1"><button aria-label="Open">${icon('folder', 'size-4')}</button><button aria-label="Clear" class="ml-[2px] flex h-4 w-[9px] items-center justify-center rounded-full bg-[#545454]">${icon('x', 'size-[14px] shrink-0')}</button>`;
});

// Node graph. Canvas coordinates are measured from the window's top; TOP is the bar above.
const TOP = 27;
const SOCK = {y:'bg-[#c7c729]', g:'bg-[#a1a1a1]', b:'bg-[#6363c7]', s:'bg-[#63c763]'};
const dot = (c, side) => c ? `<i class="absolute top-1 size-[6px] rounded-full border border-[#1c1c1c] ${side} ${SOCK[c]}"></i>` : '';
const pick = (v, cls) => `<label class="relative flex h-3 items-center rounded-[3px] bg-[#2b2b2b] ${cls}"><select aria-label="${v}" class="h-full w-full appearance-none pl-1 leading-[12px]"><option>${v}</option></select>${icon('chev', 'pointer-events-none absolute right-px size-[6px]')}</label>`;
const R = {
  out: (t, c) => `<div class="relative h-[14px] pr-3 text-right">${t}${dot(c, '-right-[3px]')}</div>`,
  in: (t, c) => `<div class="relative h-[14px] pl-3">${t}${dot(c, '-left-[3px]')}</div>`,
  gap: () => `<div class="h-[3px]"></div>`,
  gap5: () => `<div class="h-[5px]"></div>`,
  sel: t => `<div class="flex h-[17px] items-center px-2">${pick(t, 'flex-1')}</div>`,
  sel14: (t, c) => `<div class="relative flex h-[14px] items-center px-2">${pick(t, 'flex-1')}${dot(c, '-left-[3px]')}</div>`,
  check: t => `<label class="flex h-4 items-center gap-[7px] pb-[2px] pl-[9px]"><input type="checkbox" class="size-[7px] appearance-none bg-[#5e5e5e]">${t}</label>`,
  num: (t, v, f) => `<div class="relative flex h-[14px] items-center px-2">${dot('g', '-left-[3px]')}<label class="relative flex h-3 flex-1 items-center overflow-hidden rounded-[2px] bg-[#545454] pr-[6px] pl-[5px]"><i class="absolute inset-y-0 left-0 bg-[#5680c2]" style="width:${Math.max(f, 0.7)}%"></i><span class="relative whitespace-nowrap">${t}:</span><input value="${v}" class="relative w-0 min-w-6 flex-1 text-right"></label></div>`,
  val: (t, v) => `<div class="relative flex h-[14px] items-center px-2">${dot('g', '-left-[3px]')}<label class="flex h-3 flex-1 items-center rounded-[2px] bg-[#545454] px-[9px]"><span>${t}:</span><input value="${v}" class="w-0 min-w-6 flex-1 text-right"></label></div>`,
  color: (t, c) => `<div class="relative flex h-[14px] items-center justify-between pr-2 pl-3">${dot('y', '-left-[3px]')}${t}<button aria-label="${t} colour" class="h-[11px] w-[69px] rounded-[3px] ${c}"></button></div>`,
  text: () => `<div class="flex h-[17px] items-center px-2"><label class="flex h-[11px] flex-1 items-center rounded-[3px] bg-[#1d1d1d] pl-[6px]"><i class="size-[3px] bg-[#ddd]"></i><input aria-label="UV map" class="w-0 flex-1"></label></div>`,
  image: space => `<div class="flex h-[117px] flex-col">
    <div class="flex flex-1 items-center px-2"><div class="flex h-3 flex-1 gap-px overflow-hidden rounded-[3px]">
      <button aria-label="Browse image" class="flex w-5 items-center justify-center bg-[#2b2b2b]">${icon('image', 'size-[11px]')}${icon('chev', 'size-[6px]')}</button>
      <input aria-label="Image" value="Katana_Katana_.." class="w-0 flex-1 bg-[#1d1d1d] pl-[3px]">
      <button aria-label="Fake user" class="flex w-3 items-center justify-center bg-[#545454]">${icon('shield', 'size-[11px]')}</button>
      <button aria-label="New image" class="flex w-3 items-center justify-center bg-[#545454]">${icon('copy', 'size-[11px]')}</button>
      <button aria-label="Open image" class="flex w-3 items-center justify-center bg-[#545454]">${icon('folder', 'size-[11px]')}</button>
      <button aria-label="Unlink image" class="flex w-[13px] items-center justify-center bg-[#545454]">${icon('xb', 'size-[8px]')}</button></div></div>
    ${['Linear','Flat','Repeat','Single Image'].map(t => `<div class="flex flex-1 items-center px-2">${pick(t, 'flex-1')}</div>`).join('')}
    <div class="flex flex-1 items-center justify-between pr-2 pl-3">Color Space${pick(space, 'w-[69px]')}</div>
    <div class="relative flex flex-1 items-center pl-3">Vector${dot('b', '-left-[3px]')}</div></div>`
};
const tex = (name, x, y, space) => [name, x, y, 161, 'bg-[#a36037]', ['out','Color','y'],['out','Alpha','g'],['gap5'],['image',space]];
const nodes = [
  tex('Katana_Katana_BaseColor.png.002', 259, 96, 'sRGB'),
  tex('Katana_Katana_O..ssMetallic.png.002', 58, 397, 'Linear'),
  tex('Katana_Katana_Emissive.png.002', 928, 330, 'sRGB'),
  tex('Katana_Katana_Normal.png.002', 326, 765, 'Non-Color'),
  ['Separate RGB', 259, 397, 94, 'bg-[#4a89b1]', ['out','R','g'],['out','G','g'],['out','B','g'],['gap'],['in','Image','y']],
  ['Multiply', 527, 196, 93, 'bg-[#8f8130]', ['out','Color','y'],['gap5'],['sel','Multiply'],['check','Clamp'],['num','Fac','0.500',49],['in','Color1','y'],['in','Color2','y']],
  ['Principled BSDF', 660, 263, 161, 'bg-[#2d8d60]', ['out','BSDF','s'],['gap5'],['sel','GGX'],['sel','Christensen-Burley'],['in','Base Color','y'],['num','Subsurface','0.000',0],['sel14','Subsurface Radius','b'],['color','Subsurface Color','bg-[#e7e7e7]'],['in','Metallic','g'],['num','Specular','0.500',49],['num','Specular Tint','0.000',0],['in','Roughness','g'],['num','Anisotropic','0.000',0],['num','Anisotropic Rotation','0.000',0],['num','Sheen','0.000',0],['num','Sheen Tint','0.500',49],['num','Clearcoat','0.000',0],['num','Clearcoat Roughness','0.030',2],['val','IOR','1.450'],['num','Transmission','0.000',0],['num','Transmission Roughness','0.000',0],['color','Emission','bg-black'],['num','Alpha','1.000',100],['in','Normal','b'],['in','Clearcoat Normal','b'],['in','Tangent','b'],['gap']],
  ['Emission', 1195, 330, 94, 'bg-[#2d8d60]', ['out','Emission','s'],['gap'],['in','Color','y'],['val','Strength','1.000']],
  ['Add Shader', 1329, 263, 94, 'bg-[#2d8d60]', ['out','Shader','s'],['gap'],['in','Shader','s'],['in','Shader','s']],
  ['Material Output', 1463, 263, 94, 'bg-[#812c36]', ['sel14','All'],['gap'],['in','Surface','s'],['in','Volume','s'],['in','Displacement','b']],
  ['Normal Map', 527, 731, 100, 'bg-[#6f59ad]', ['out','Normal','b'],['gap5'],['sel','Tangent Space'],['text'],['val','Strength','1.000'],['in','Color','y']]
];
for (const [name, x, y, w, head, ...rows] of nodes) {
  $('#canvas').insertAdjacentHTML('beforeend', `<article class="absolute rounded-[3px] bg-[#3f3f3f] pb-px text-[7px] shadow-[0_1px_5px_1px_rgba(0,0,0,0.6)]" style="left:${x}px;top:${y - TOP}px;width:${w}px">
    <h3 class="mb-1 flex h-[13px] items-center gap-[3px] rounded-t-[3px] pl-[6px] whitespace-nowrap ${head}">${icon('tdown', 'size-[6px] shrink-0')}${name}</h3>${rows.map(([k, ...a]) => R[k](...a)).join('')}</article>`);
}

// Background grid and links
const links = [[420,120,527,285],[353,421,527,299],[353,435,660,438],[353,449,660,396],[219,421,259,466],[620,220,660,340],[821,287,1329,303],[1089,354,1195,370],[1289,354,1329,317],[1423,287,1463,303],[487,789,527,822],[627,755,660,607]];
const draw = () => {
  const w = $('#canvas').clientWidth, h = $('#canvas').clientHeight;
  let minor = '', major = '';
  for (let k = -30; 392 + k * 13.36 < w; k++) { const s = `M${Math.round(392 + k * 13.36)} 0v${h}`; k % 5 ? minor += s : major += s; }
  for (let k = -18; 236 + k * 13.36 < h; k++) { const s = `M0 ${Math.round(236 + k * 13.36)}h${w}`; k % 5 ? minor += s : major += s; }
  $('#wires').innerHTML = `<g fill="none" transform="translate(.5 .5)"><path d="${minor}" stroke="#1c1c1c"/><path d="${major}" stroke="#141414"/><path d="M392 0v${h}" stroke="#0a0a0a"/></g>` +
    links.map(l => { const d = `M${l[0]} ${l[1] - TOP}L${l[2]} ${l[3] - TOP}`; return `<path d="${d}" stroke="#1e1e1e" stroke-width="5"/><path d="${d}" stroke="#858585" stroke-width="3"/>`; }).join('');
};
draw();
addEventListener('resize', draw);
</script>
</body>
</html>
